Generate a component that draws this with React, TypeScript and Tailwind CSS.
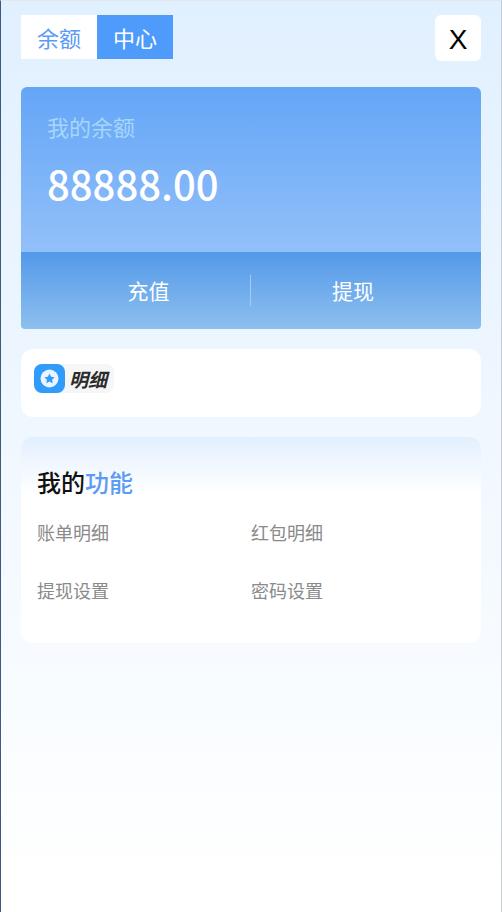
export default function App() {
  return (
    <div className="h-[912px] w-[502px] overflow-hidden border-t border-l border-r border-t-[#e3e6ea] border-l-[#3f5a80] border-r-[#c8ccd2] bg-gradient-to-b from-[#e1f0ff] to-white to-[97%] font-['Noto_Sans_CJK_SC','Liberation_Sans',sans-serif]">
      <div className="flex flex-col px-5 pt-[14px]">
        <div className="flex items-start justify-between">
          <div className="flex h-11">
            <div className="flex w-[76px] items-center justify-center bg-white text-[22px] text-[#5b9bf5]">余额</div>
            <div className="flex w-[76px] items-center justify-center bg-[#4f9bfb] text-[22px] text-white">中心</div>
          </div>
          <div className="flex h-[46px] w-[46px] items-center justify-center rounded-md bg-white pt-[3px] font-['Liberation_Sans',sans-serif] text-[28px] leading-none text-black">X</div>
        </div>

        <div className="mt-[26px] overflow-hidden rounded-t-md rounded-b-[4px]">
          <div className="flex h-[165px] flex-col bg-gradient-to-b from-[#64a5f7] to-[#92c0f9] px-[26px] pt-[23px]">
            <div className="text-[22px] leading-[32px] text-[#a6d6fa]">我的余额</div>
            <div className="mt-[12px] text-[40px] leading-[58px] font-medium text-white">88888.00</div>
          </div>
          <div className="flex h-[77px] items-center bg-gradient-to-b from-[#5299e9] to-[#8ec0ee] text-[21px] text-white">
            <div className="flex w-[229px] justify-center pl-[26px]">充值</div>
            <div className="h-[31px] w-px bg-[#a5cbf2]" />
            <div className="flex flex-1 justify-center pr-[26px]">提现</div>
          </div>
        </div>

        <div className="mt-5 flex h-[68px] items-start rounded-xl bg-white pt-[15px] pl-[13px]">
          <div className="flex h-[29px] w-[80px] items-center rounded-lg bg-[#f6f6f6]">
            <div className="flex h-[29px] w-[31px] items-center justify-center rounded-lg bg-[#2f9bfa]">
              <svg width="19" height="19" viewBox="0 0 19 19">
                <circle cx="9.5" cy="9.5" r="9" fill="#eaf5ff" />
                <path d="M9.5 4.5l1.6 3.2 3.5.5-2.5 2.5.6 3.5-3.2-1.7-3.2 1.7.6-3.5-2.5-2.5 3.5-.5z" fill="#2f9bfa" />
              </svg>
            </div>
            <span className="ml-[4px] text-[19px] leading-none font-bold text-[#2b2b2b] italic">明细</span>
          </div>
        </div>

        <div className="mt-5 h-[206px] rounded-xl bg-gradient-to-b from-[#e2effe] to-white to-[27%] px-4 pt-[26px]">
          <div className="text-[24px] leading-[38px] font-medium text-[#111]">
            我的<span className="text-[#5b9bf5]">功能</span>
          </div>
          <div className="mt-[18px] grid grid-cols-2 gap-y-[32px] text-[18px] leading-[26px] text-[#8a8a8a]">
            <div>账单明细</div>
            <div>红包明细</div>
            <div>提现设置</div>
            <div>密码设置</div>
          </div>
        </div>
      </div>
    </div>
  );
}
